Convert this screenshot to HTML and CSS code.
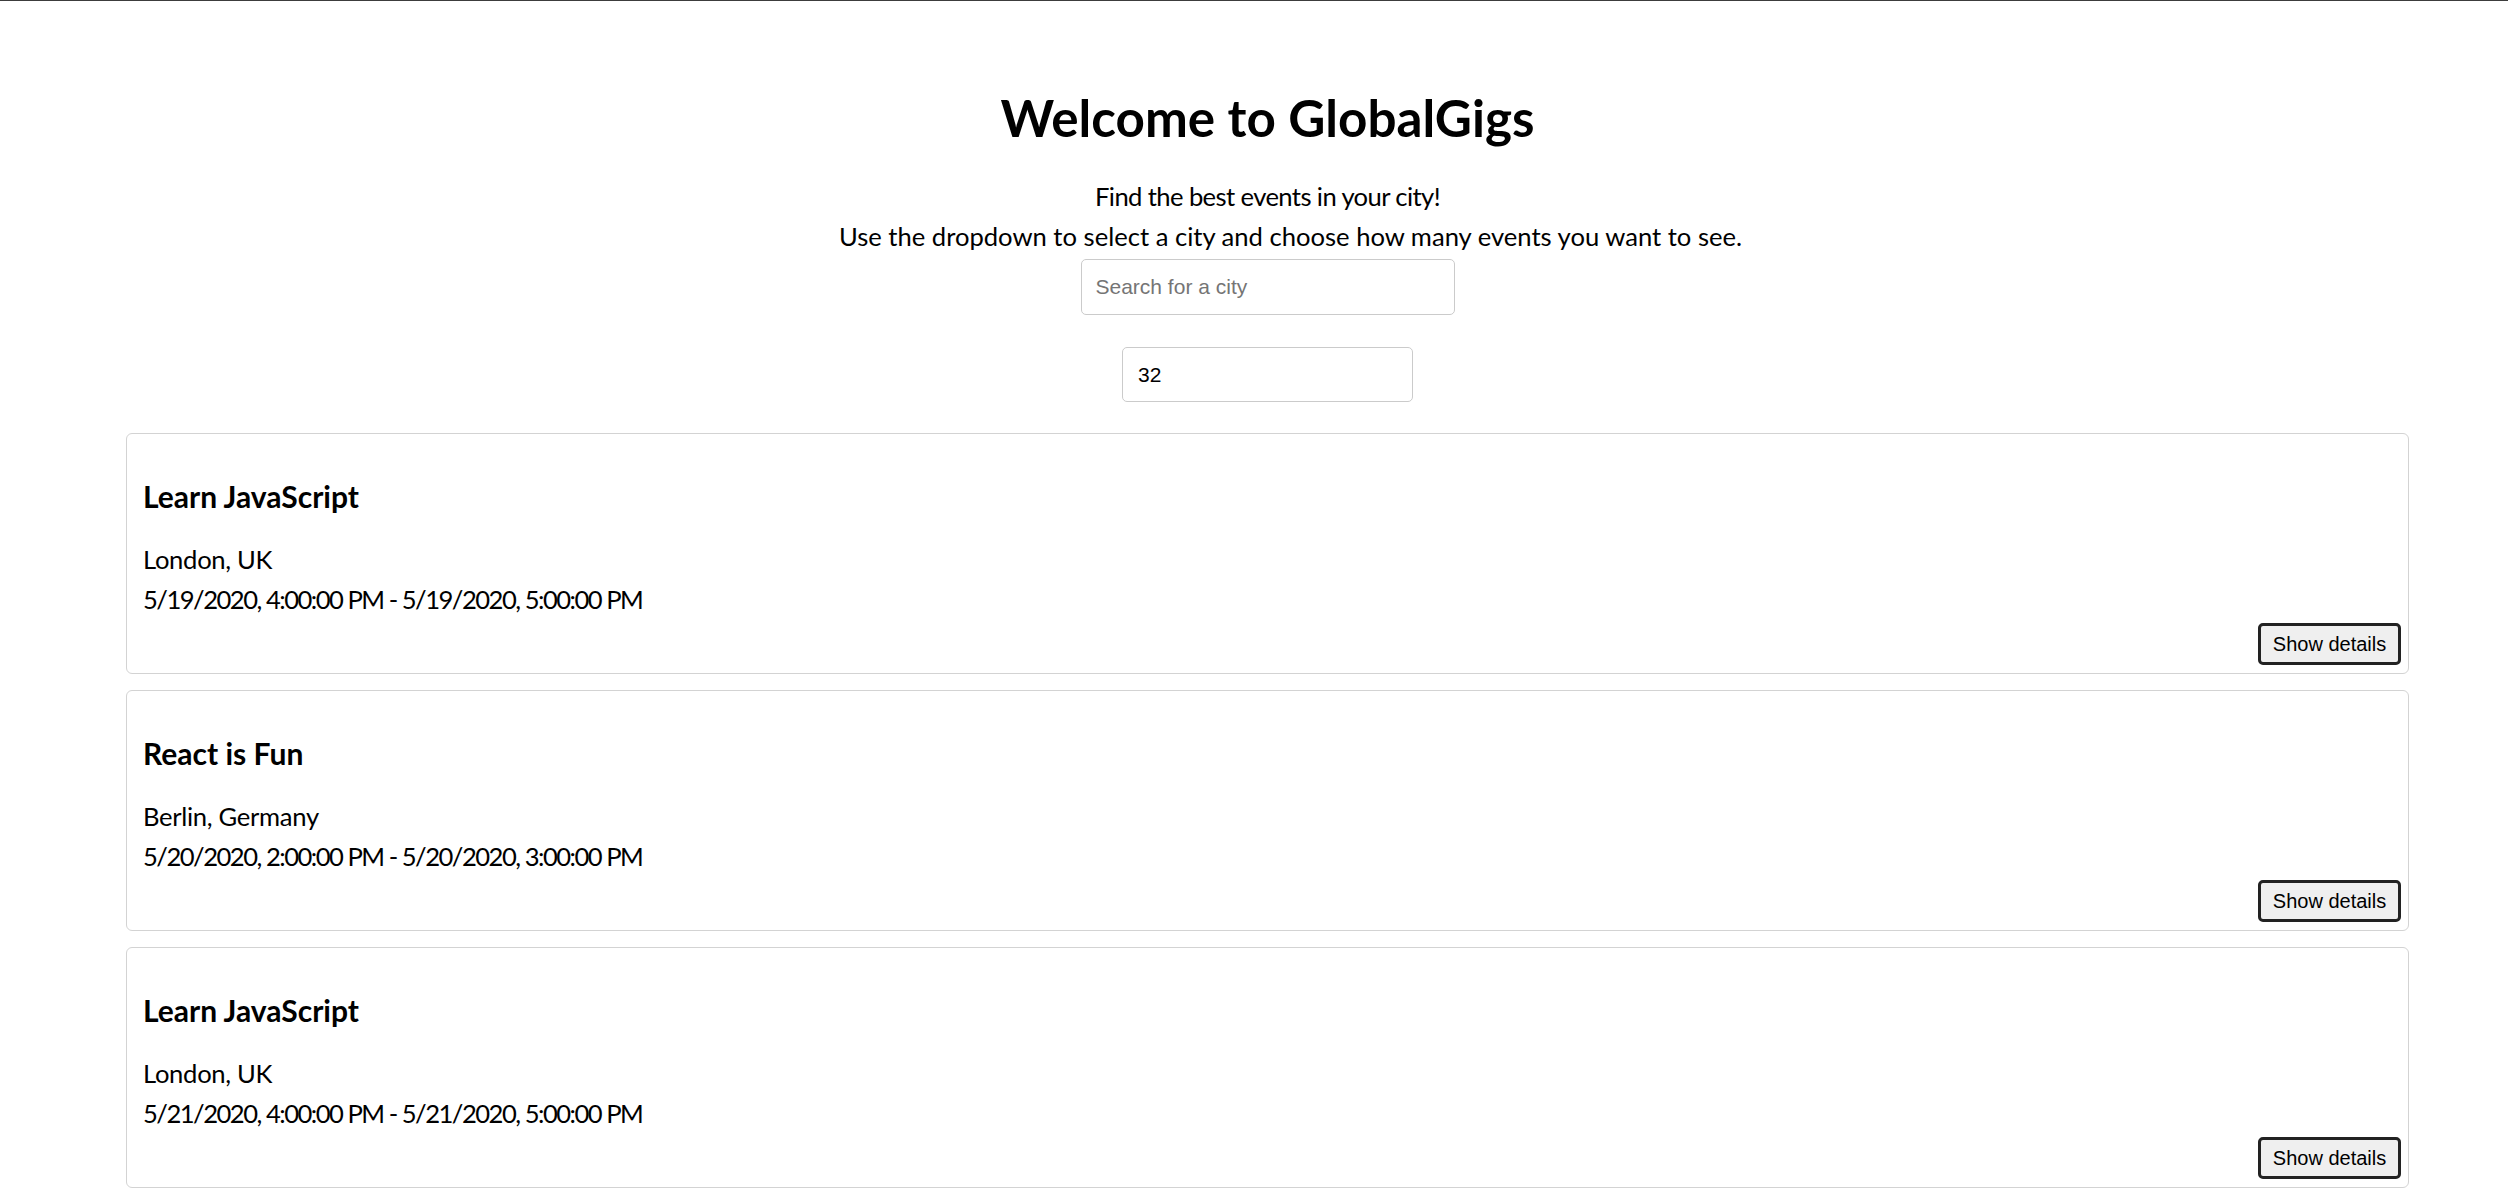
FILE: index.html
```html
<!DOCTYPE html>
<html lang="en">
<head>
<meta charset="utf-8">
<title>GlobalGigs</title>
<link rel="stylesheet" href="styles.css">
</head>
<body>
<div class="app">
  <h1 class="title">Welcome to GlobalGigs</h1>
  <p class="lead lead-first">Find the best events in your city!</p>
  <p class="lead lead-second">Use the dropdown to select a city and choose how many events you want to see.</p>
  <input class="field city-field" type="text" placeholder="Search for a city">
  <input class="field count-field" type="number" value="32">
  <ul class="event-list">
    <li class="event">
      <h3 class="event-title">Learn JavaScript</h3>
      <p class="event-location">London, UK</p>
      <p class="event-time">5/19/2020, 4:00:00 PM - 5/19/2020, 5:00:00 PM</p>
      <button class="details-btn">Show details</button>
    </li>
    <li class="event">
      <h3 class="event-title">React is Fun</h3>
      <p class="event-location">Berlin, Germany</p>
      <p class="event-time">5/20/2020, 2:00:00 PM - 5/20/2020, 3:00:00 PM</p>
      <button class="details-btn">Show details</button>
    </li>
    <li class="event">
      <h3 class="event-title">Learn JavaScript</h3>
      <p class="event-location">London, UK</p>
      <p class="event-time">5/21/2020, 4:00:00 PM - 5/21/2020, 5:00:00 PM</p>
      <button class="details-btn">Show details</button>
    </li>
  </ul>
</div>
</body>
</html>
```
FILE: styles.css
```css
* { box-sizing: border-box; }
html, body { height: 100%; }
body {
  margin: 0;
  border-top: 1px solid #3c3c3c;
  background: #fff;
  color: #000;
  font-family: Lato, "Noto Sans", sans-serif;
  overflow: hidden;
}
.app {
  padding: 0 99px 0 126px;
  text-align: center;
}
.title {
  margin: 85px 0 0;
  font-size: 51.2px;
  line-height: 62px;
  font-weight: 700;
}
.lead {
  margin: 0;
  font-size: 25.6px;
  line-height: 40px;
}
.lead-first {
  margin-top: 28px;
  letter-spacing: -0.6px;
}
.lead-second {
  padding-left: 46px;
}
.field {
  display: block;
  margin-left: auto;
  margin-right: auto;
  border: 1.5px solid #cbcbcb;
  border-radius: 5px;
  font-family: "Liberation Sans", Arial, sans-serif;
  font-size: 21px;
  color: #000;
  background: #fff;
  outline: none;
}
.field::placeholder { color: #757575; }
.city-field {
  margin-top: 3px;
  width: 374px;
  height: 56px;
  padding: 0 14px;
}
.count-field {
  margin-top: 32px;
  width: 291px;
  height: 55px;
  padding: 0 15px;
  -moz-appearance: textfield;
}
.count-field::-webkit-inner-spin-button,
.count-field::-webkit-outer-spin-button { -webkit-appearance: none; margin: 0; }
.event-list {
  list-style: none;
  margin: 31px 0 0;
  padding: 0;
  display: flex;
  flex-direction: column;
  gap: 16px;
  text-align: left;
}
.event {
  display: flex;
  flex-direction: column;
  border: 1px solid #d3d3d3;
  border-radius: 6px;
  padding: 0 7px 8px 16px;
}
.event-title {
  margin: 44px 0 0;
  font-size: 30px;
  line-height: 36px;
  font-weight: 700;
}
.event-location {
  margin: 25px 0 0;
  font-size: 25.6px;
  line-height: 40px;
  letter-spacing: -0.3px;
}
.event-time {
  margin: 0;
  font-size: 25.6px;
  line-height: 40px;
  letter-spacing: -1.5px;
}
.details-btn {
  align-self: flex-end;
  margin-top: 4px;
  width: 143px;
  height: 42px;
  padding: 0;
  background: #efefef;
  border: 3px solid #222;
  border-radius: 5px;
  color: #000;
  font-family: "Liberation Sans", Arial, sans-serif;
  font-size: 20px;
  cursor: pointer;
}
```
